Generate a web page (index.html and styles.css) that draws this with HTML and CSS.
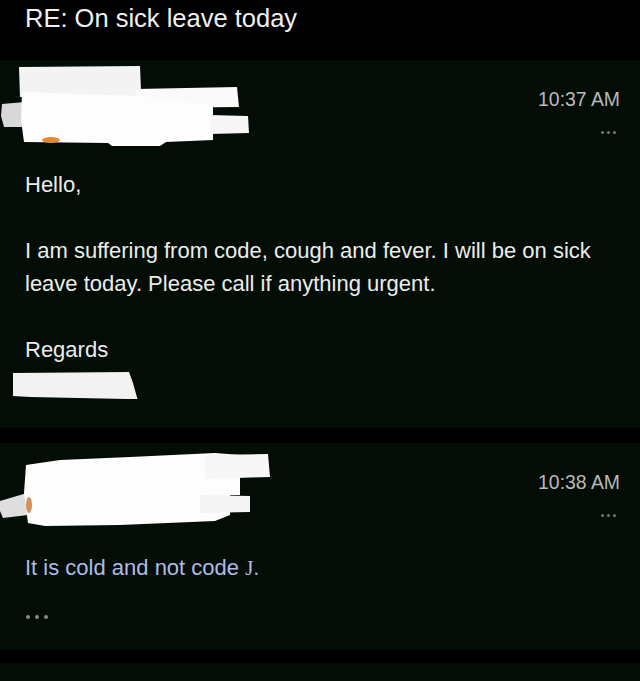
FILE: index.html
```html
<!DOCTYPE html>
<html lang="en">
<head>
    <meta charset="UTF-8">
    <meta name="viewport" content="width=device-width, initial-scale=1.0">
    <title>RE: On sick leave today</title>
    <link rel="stylesheet" href="styles.css">
</head>
<body>
    <div class="thread">
        <div class="thread-header">
            <h1>RE: On sick leave today</h1>
        </div>

        <div class="message">
            <div class="message-head">
                <!-- sender name, scribbled out -->
                <svg class="scribble" width="260" height="100" viewBox="0 0 260 100">
                    <g class="smudge">
                        <polygon fill="#d8d8d8" points="2,44 25,42 25,67 4,67 1,56"/>
                        <polygon fill="#f3f3f3" points="19,7 140,6 141,30 136,37 20,37"/>
                        <polygon fill="#fafafa" points="136,29 237,27 239,47 136,48"/>
                        <polygon fill="#fdfdfd" points="22,32 140,36 213,46 213,80 166,82 160,86 112,86 108,83 24,82 21,60"/>
                        <polygon fill="#f6f6f6" points="210,55 248,56 249,73 210,74"/>
                        <ellipse fill="#e08a30" cx="51" cy="80" rx="9" ry="3"/>
                    </g>
                </svg>
                <div class="meta">
                    <div class="time">10:37 AM</div>
                    <div class="more"><i></i><i></i><i></i></div>
                </div>
            </div>
            <div class="message-body">
                <p>Hello,</p>
                <p>I am suffering from code, cough and fever. I will be on sick leave today. Please call if anything urgent.</p>
                <p>Regards<br>
                    <svg class="signature" width="140" height="33" viewBox="0 0 140 33">
                        <polygon class="smudge" fill="#f2f2f2" points="13,7 129,6 133,17 138,35 127,33 30,31 13,30"/>
                    </svg>
                </p>
            </div>
        </div>

        <div class="message">
            <div class="message-head">
                <svg class="scribble" width="280" height="100" viewBox="0 0 280 100">
                    <g class="smudge">
                        <polygon fill="#dedede" points="0,58 27,50 28,72 3,75 0,68"/>
                        <polygon fill="#fdfdfd" points="26,22 60,17 130,14 215,10 240,12 240,52 230,52 230,72 215,78 120,82 45,83 28,80 24,50"/>
                        <polygon fill="#f7f7f7" points="205,12 268,11 270,34 205,36"/>
                        <polygon fill="#f4f4f4" points="200,52 250,53 250,69 200,70"/>
                        <ellipse fill="#d09060" cx="29" cy="62" rx="3" ry="8"/>
                    </g>
                </svg>
                <div class="meta">
                    <div class="time">10:38 AM</div>
                    <div class="more"><i></i><i></i><i></i></div>
                </div>
            </div>
            <div class="message-body">
                <p class="reply">It is cold and not code <span class="glyph">J</span>.</p>
                <div class="trimmed"><i></i><i></i><i></i></div>
            </div>
        </div>

        <div class="message message-next"></div>
    </div>
</body>
</html>
```

FILE: styles.css
```css
* {
    margin: 0;
    padding: 0;
    box-sizing: border-box;
}

body {
    background: #000;
    font-family: "Liberation Sans", Arial, sans-serif;
    color: #ececec;
}

.thread {
    width: 640px;
    height: 681px;
    overflow: hidden;
}

.thread-header {
    height: 60px;
    padding: 3px 0 0 25px;
}

h1 {
    font-size: 25.5px;
    line-height: 30px;
    font-weight: 400;
    color: #f0f0f0;
}

.message {
    background: #030c05;
    margin-bottom: 15px;
}

.message-head {
    height: 108px;
    display: flex;
    justify-content: space-between;
    align-items: flex-start;
}

.scribble {
    display: block;
}

.smudge {
    filter: blur(0.7px);
}

.meta {
    padding: 27px 20px 0 0;
    text-align: right;
}

.time {
    font-size: 19.4px;
    line-height: 24px;
    color: #b9b9b9;
}

.more {
    display: flex;
    justify-content: flex-end;
    gap: 3px;
    margin-top: 20px;
    padding-right: 4px;
}

.more i {
    width: 3px;
    height: 3px;
    border-radius: 50%;
    background: #777;
}

.message-body {
    padding: 0 25px 29px;
    font-size: 22px;
    line-height: 33px;
}

.message-body p + p {
    margin-top: 33px;
}

.signature {
    display: block;
    margin-left: -25px;
}

.reply {
    color: #aebbe6;
}

.glyph {
    font-family: "Liberation Serif", serif;
    font-size: 21px;
}

.trimmed {
    display: flex;
    gap: 5px;
    margin-top: 30px;
    padding-left: 1px;
}

.trimmed i {
    width: 4px;
    height: 4px;
    border-radius: 50%;
    background: #8a8a8a;
}

.message:nth-child(3) .message-body {
    padding-bottom: 31px;
}

.message-next {
    height: 40px;
    margin-top: -2px;
}
```
